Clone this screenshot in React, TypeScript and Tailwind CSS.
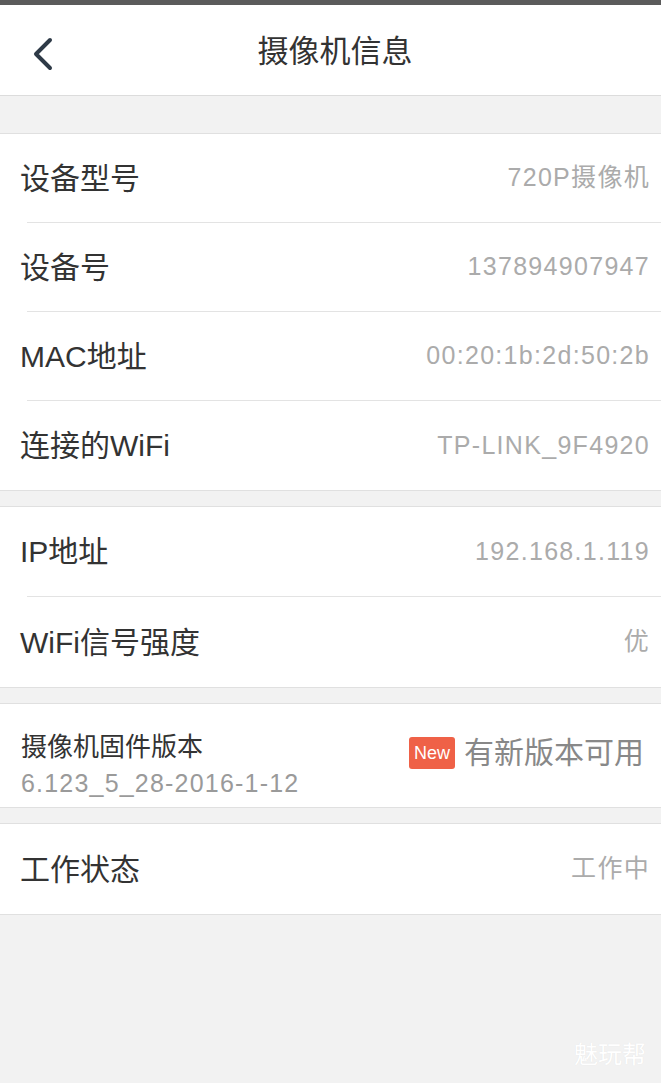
const font = { fontFamily: '"Liberation Sans", "Noto Sans CJK SC", sans-serif' };

type Row = { label: string; value: string };

const group1: Row[] = [
  { label: "设备型号", value: "720P摄像机" },
  { label: "设备号", value: "137894907947" },
  { label: "MAC地址", value: "00:20:1b:2d:50:2b" },
  { label: "连接的WiFi", value: "TP-LINK_9F4920" },
];

const group2: Row[] = [
  { label: "IP地址", value: "192.168.1.119" },
  { label: "WiFi信号强度", value: "优" },
];

function InfoRow({ row, last, tall }: { row: Row; last: boolean; tall?: boolean }) {
  return (
    <div className="pl-[27px]">
      <div
        className={`${tall ? "h-[90px]" : "h-[89px]"} flex items-center justify-between pr-[11px] ${
          last ? "" : "border-b border-[#e3e3e3]"
        }`}
      >
        <span className="-ml-[7px] text-[30px] text-[#333]">{row.label}</span>
        <span className="text-[25px] tracking-[1.3px] text-[#ababab]">{row.value}</span>
      </div>
    </div>
  );
}

function Group({ rows, tall }: { rows: Row[]; tall?: boolean }) {
  return (
    <div className="bg-white border-y border-[#e0e0e0]">
      {rows.map((r, i) => (
        <InfoRow key={r.label} row={r} last={i === rows.length - 1} tall={tall} />
      ))}
    </div>
  );
}

export default function App() {
  return (
    <div className="relative min-h-[1083px] bg-[#f2f2f2]" style={font}>
      <div className="h-[5px] bg-[#5b5b5b]" />

      {/* Header */}
      <div className="relative h-[91px] bg-white border-b border-[#dcdcdc] flex items-center justify-center">
        <svg
          className="absolute left-[31px] top-[31px]"
          width="24"
          height="36"
          viewBox="0 0 24 36"
          fill="none"
        >
          <path
            d="M19 4 L5 18 L19 32"
            stroke="#2e3a47"
            strokeWidth="4"
            strokeLinecap="round"
            strokeLinejoin="round"
          />
        </svg>
        <h1 className="text-[31px] text-[#333] font-normal mt-[4px] ml-[9px]">摄像机信息</h1>
      </div>

      <div className="h-[37px]" />
      <Group rows={group1} />

      <div className="h-[15px]" />
      <Group rows={group2} tall />

      <div className="h-[15px]" />
      {/* Firmware */}
      <div className="bg-white border-y border-[#e0e0e0] h-[105px] flex items-start justify-between pl-[21px] pr-[17px]">
        <div className="flex flex-col pt-[25px]">
          <span className="text-[26px] leading-[36px] text-[#333]">摄像机固件版本</span>
          <span className="text-[25px] leading-[36px] tracking-[1.2px] text-[#9a9a9a]">
            6.123_5_28-2016-1-12
          </span>
        </div>
        <div className="flex items-center gap-[9px] pt-[32px]">
          <span className="bg-[#ef6147] text-white text-[18px] leading-[32px] px-[5px] rounded-[3px]">
            New
          </span>
          <span className="text-[30px] leading-[34px] text-[#888]">有新版本可用</span>
        </div>
      </div>

      <div className="h-[15px]" />
      <Group rows={[{ label: "工作状态", value: "工作中" }]} tall />

      <span
        className="absolute right-[15px] bottom-[10px] text-[24px] text-white"
        style={{ textShadow: "0 0 1px rgba(0,0,0,0.08)" }}
      >
        魅玩帮
      </span>
    </div>
  );
}
